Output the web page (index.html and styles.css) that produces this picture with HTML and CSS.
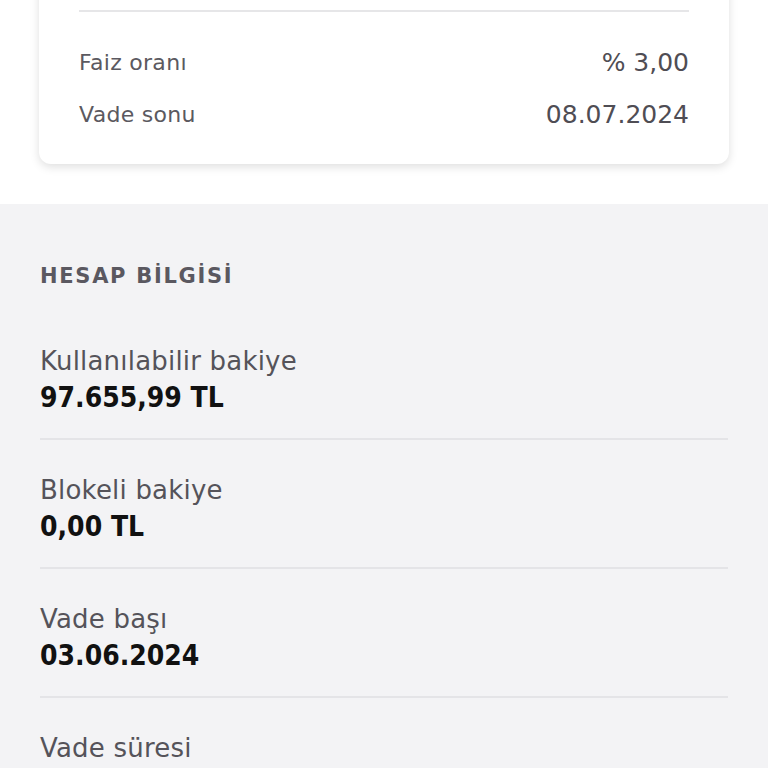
FILE: index.html
```html
<!DOCTYPE html>
<html lang="tr">
<head>
    <meta charset="UTF-8">
    <meta name="viewport" content="width=device-width, initial-scale=1.0">
    <title>Hesap Bilgisi</title>
    <link rel="stylesheet" href="styles.css">
</head>
<body>
    <div class="top">
        <div class="card">
            <div class="card-divider"></div>
            <div class="card-row">
                <span class="card-label">Faiz oranı</span>
                <span class="card-value">% 3,00</span>
            </div>
            <div class="card-row">
                <span class="card-label">Vade sonu</span>
                <span class="card-value">08.07.2024</span>
            </div>
        </div>
    </div>

    <div class="info">
        <h2 class="info-title">HESAP BİLGİSİ</h2>
        <div class="info-item">
            <div class="info-label">Kullanılabilir bakiye</div>
            <div class="info-value">97.655,99 TL</div>
        </div>
        <div class="info-item">
            <div class="info-label">Blokeli bakiye</div>
            <div class="info-value">0,00 TL</div>
        </div>
        <div class="info-item">
            <div class="info-label">Vade başı</div>
            <div class="info-value">03.06.2024</div>
        </div>
        <div class="info-item">
            <div class="info-label">Vade süresi</div>
        </div>
    </div>
</body>
</html>
```

FILE: styles.css
```css
body {
    margin: 0;
    font-family: "DejaVu Sans", sans-serif;
    background-color: #f3f3f5;
    color: #111;
    height: 768px;
    overflow: hidden;
}
.top {
    background-color: #ffffff;
    padding: 0 39px 40px 39px;
    overflow: hidden;
}
.card {
    background-color: #ffffff;
    border-radius: 12px;
    box-shadow: 0 3px 10px rgba(0, 0, 0, 0.13);
    margin-top: -30px;
    padding: 40px 40px 24px 40px;
}
.card-divider {
    border-top: 2px solid #e6e6e8;
    margin-bottom: 24px;
}
.card-row {
    display: flex;
    justify-content: space-between;
    align-items: center;
    height: 52px;
}
.card-label {
    font-size: 22px;
    letter-spacing: 0.3px;
    color: #5b5960;
}
.card-value {
    font-size: 25px;
    color: #4f4d54;
}
.info {
    padding: 58px 40px 0 40px;
}
.info-title {
    margin: 0 0 53px 0;
    font-size: 21px;
    line-height: 28px;
    font-weight: 700;
    letter-spacing: 1.7px;
    color: #5a5860;
}
.info-item {
    padding: 0 0 21px 0;
    margin-bottom: 32px;
    border-bottom: 2px solid #e4e4e7;
}
.info-label {
    font-size: 26px;
    letter-spacing: 0.2px;
    color: #55535a;
    line-height: 36px;
}
.info-value {
    font-family: "DejaVu Sans Condensed", "DejaVu Sans", sans-serif;
    font-size: 28px;
    font-weight: 700;
    color: #111;
    line-height: 38px;
}
```
